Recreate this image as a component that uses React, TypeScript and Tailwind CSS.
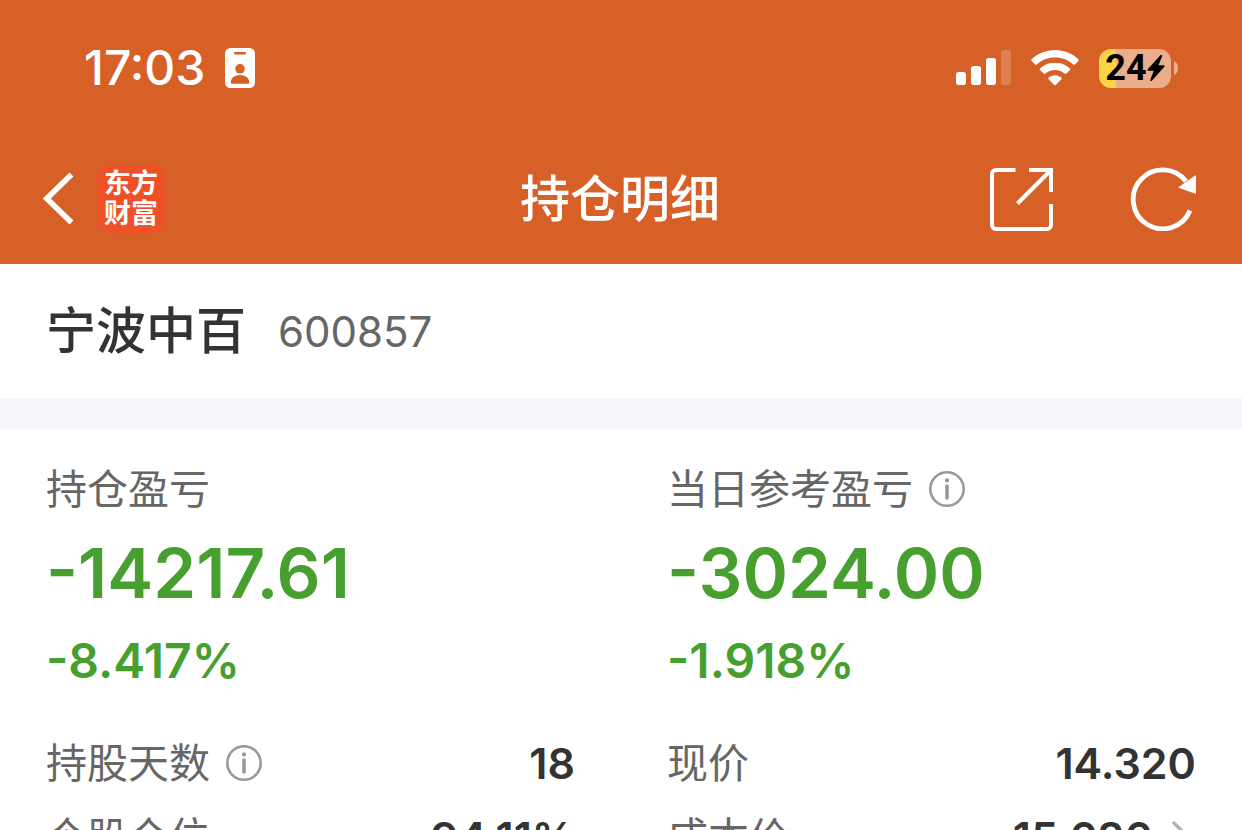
import type { ReactNode } from 'react';

type SummaryProps = {
  label: string;
  amount: string;
  percent: string;
  hasInfo?: boolean;
};

type DetailRowProps = {
  label: string;
  value: string;
  hasInfo?: boolean;
  hasLink?: boolean;
};

const InfoButton = ({ label }: { label: string }) => (
  <button type="button" aria-label={`${label}说明`} className="shrink-0">
    <svg className="size-9" viewBox="0 0 36 36" fill="none">
      <circle cx="18" cy="18" r="16.7" stroke="#999" strokeWidth="2.6" />
      <circle cx="18" cy="9.4" r="2.1" fill="#999" />
      <path d="M18 15v12" stroke="#999" strokeWidth="3.6" strokeLinecap="round" />
    </svg>
  </button>
);

const Label = ({ children }: { children: ReactNode }) => (
  <span className="text-[41px] leading-[60px] text-[#666]">{children}</span>
);

const StatusBar = () => (
  <div className="flex items-center justify-between pt-10 pr-16 pl-[84px]">
    <div className="flex items-center gap-5">
      <span className="text-[48px] leading-[56px] font-medium">17:03</span>
      <svg className="h-10 w-[30px]" viewBox="0 0 30 40">
        <rect width="30" height="40" rx="5.5" fill="#fff" />
        <rect x="9" y="4" width="12" height="2.6" rx="1.3" fill="#d76027" />
        <circle cx="15" cy="20.8" r="4.8" fill="#d76027" />
        <path
          d="M5.8 34.4c0-4.6 4.2-7.4 9.2-7.4s9.2 2.8 9.2 7.4c0 .9-.4 1.3-1.2 1.3H7c-.8 0-1.2-.4-1.2-1.3z"
          fill="#d76027"
        />
      </svg>
    </div>

    <div className="flex items-center">
      <svg className="h-9 w-[55px]" viewBox="0 0 55 36" fill="#fff">
        <rect y="22" width="10" height="13" rx="2.8" />
        <rect x="15" y="16" width="10" height="19" rx="2.8" />
        <rect x="30" y="8" width="10" height="27" rx="2.8" />
        <rect x="45" width="10" height="35" rx="2.8" opacity="0.2" />
      </svg>
      <svg className="ml-5 h-9 w-12" viewBox="0 0 48 36" fill="#fff">
        <path d="M24 0C14.9 0 6.700 3.500.6 9.200c-.5.5-.5 1.200 0 1.700l3.500 3.500c.5.5 1.100.5 1.600 0C10.500 10 17 7.400 24 7.400s13.500 2.600 18.300 7c.5.5 1.100.5 1.600 0l3.500-3.500c.5-.5.5-1.200 0-1.700C41.300 3.500 33.100 0 24 0z" />
        <path d="M24 12.600c-5.800 0-11 2.200-15 5.800-.5.5-.5 1.200 0 1.700l3.600 3.500c.5.5 1.100.5 1.600 0 2.600-2.300 6-3.700 9.800-3.700s7.200 1.400 9.800 3.700c.5.5 1.100.5 1.600 0l3.600-3.500c.5-.5.5-1.200 0-1.700-4-3.600-9.200-5.800-15-5.800z" />
        <path d="M24 25.200c-2.500 0-4.700.9-6.400 2.400-.5.5-.5 1.100 0 1.600l5.600 5.700c.5.5 1.100.5 1.600 0l5.600-5.700c.5-.5.5-1.100 0-1.600-1.700-1.500-3.900-2.400-6.400-2.400z" />
      </svg>
      <div className="ml-5 flex h-[39px] w-[72px] items-center justify-center rounded-[12px] bg-linear-to-r from-[#f7d545] from-24% to-[#ebae8c] to-24% text-black">
        <span className="font-[Roboto] text-[36px] leading-[39px] font-bold">24</span>
        <svg className="h-7 w-[18px]" viewBox="0 0 18 28">
          <path
            d="M13.200 1.400.9 15c-.8.900-.4 1.800.7 1.800h5.200L3.400 25.400c-.6 1.400.7 2.100 1.700 1L17.200 13c.8-.9.4-1.800-.7-1.800h-5L15 2.400c.6-1.400-.8-2-1.800-1z"
            fill="#000"
          />
        </svg>
      </div>
      <svg className="ml-[3px] h-[14px] w-1" viewBox="0 0 4 14">
        <path d="M0 0c2.500 1 4 3.600 4 7s-1.500 6-4 7z" fill="#ebae8c" />
      </svg>
    </div>
  </div>
);

const NavBar = () => (
  <nav className="grid grid-cols-[1fr_auto_1fr] items-center pt-[66px] pr-[45px] pl-[43px]">
    <div className="flex items-center gap-[22px]">
      <button type="button" aria-label="返回">
        <svg className="h-[54px] w-8" viewBox="0 0 32 54" fill="none">
          <path d="M28.500 2.500 3.800 26.500l24.700 24" stroke="#fff" strokeWidth="5.500" />
        </svg>
      </button>
      <a
        href="#"
        className="flex size-[68px] flex-col items-center justify-center rounded-[14px] bg-[#ee5028] text-[27px] leading-[30px] font-bold"
      >
        <span>东方</span>
        <span>财富</span>
      </a>
    </div>
    <h1 className="text-[50px] leading-[74px] font-medium">持仓明细</h1>
    <div className="flex items-center justify-end gap-[76px]">
      <button type="button" aria-label="分享">
        <svg className="size-16" viewBox="0 0 64 64" fill="none" stroke="#fff" strokeWidth="4">
          <path d="M25.500 3H6a4 4 0 0 0-4 4v51a4 4 0 0 0 4 4h51a4 4 0 0 0 4-4V37" />
          <path d="M39 3h22v22" />
          <path d="M60 4 27.500 36.500" />
        </svg>
      </button>
      <button type="button" aria-label="刷新">
        <svg className="h-16 w-[67px]" viewBox="0 0 67 64" fill="none">
          <path d="M60 43.500A29.500 29.500 0 1 1 56 14.300" stroke="#fff" strokeWidth="4.800" />
          <path d="M66 8v19L48 20.500z" fill="#fff" />
        </svg>
      </button>
    </div>
  </nav>
);

const Summary = ({ label, amount, percent, hasInfo }: SummaryProps) => (
  <div>
    <div className="flex items-center gap-4">
      <Label>{label}</Label>
      {hasInfo && <InfoButton label={label} />}
    </div>
    <p className="mt-3 text-[69px] leading-[84px] font-semibold">{amount}</p>
    <p className="mt-4 text-[48px] leading-[60px] font-semibold">{percent}</p>
  </div>
);

const DetailRow = ({ label, value, hasInfo, hasLink }: DetailRowProps) => (
  <div className="flex items-center justify-between">
    <dt className="flex items-center gap-4">
      <Label>{label}</Label>
      {hasInfo && <InfoButton label={label} />}
    </dt>
    <dd className="flex items-center gap-5 text-[43px] leading-[60px] font-semibold text-[#333]">
      {value}
      {hasLink && (
        <button type="button" aria-label={`${label}详情`}>
          <svg className="h-8 w-6" viewBox="0 0 24 32" fill="none">
            <path d="m2 2 14 14L2 30" stroke="#b3b3b3" strokeWidth="3.500" strokeLinecap="round" />
          </svg>
        </button>
      )}
    </dd>
  </div>
);

export default function App() {
  return (
    <div className="h-screen overflow-hidden bg-white font-['Inter','Noto_Sans_CJK_SC',sans-serif]">
      <header className="bg-[#d76027] pb-7 text-white">
        <StatusBar />
        <NavBar />
      </header>

      <main>
        <section className="flex items-center gap-8 border-b-[30px] border-[#f6f7fa] px-[46px] py-[30px]">
          <h2 className="text-[50px] leading-[75px] font-medium text-[#333]">宁波中百</h2>
          <span className="text-[42px] leading-[60px] text-[#666]">600857</span>
        </section>

        <section className="px-[46px] pt-[30px]">
          <div className="grid grid-cols-2 gap-x-[92px] text-[#479f30]">
            <Summary label="持仓盈亏" amount="-14217.61" percent="-8.417%" />
            <Summary label="当日参考盈亏" amount="-3024.00" percent="-1.918%" hasInfo />
          </div>

          <dl className="mt-[42px] grid grid-cols-2 gap-x-[92px] gap-y-[14px]">
            <DetailRow label="持股天数" value="18" hasInfo />
            <DetailRow label="现价" value="14.320" />
            <DetailRow label="个股仓位" value="94.11%" />
            <DetailRow label="成本价" value="15.686" hasLink />
          </dl>
        </section>
      </main>
    </div>
  );
}
